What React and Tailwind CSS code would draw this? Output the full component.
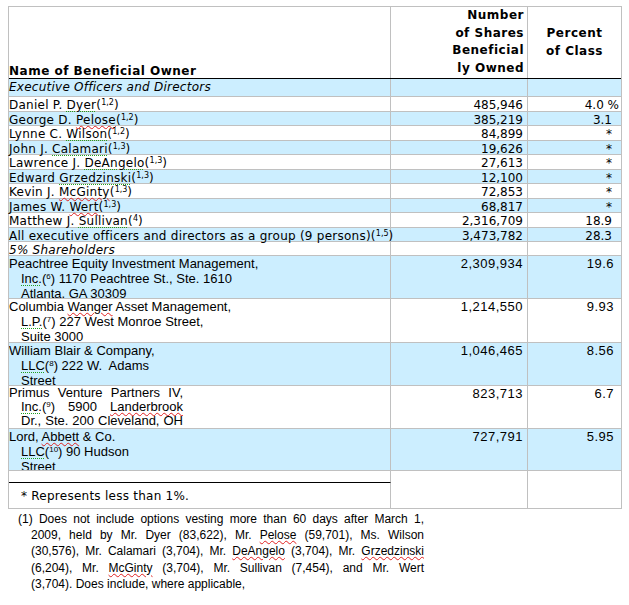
import React from 'react';

const Red = ({ children }) => (
  <span className="underline decoration-wavy decoration-[#e02020] decoration-1 underline-offset-[1px]">{children}</span>
);
const Green = ({ children }) => (
  <span className="underline decoration-dotted decoration-[#20a020] decoration-1 underline-offset-[2px]">{children}</span>
);
const Sup = ({ children }) => <sup className="text-[8px] top-[-4px] tracking-normal">{children}</sup>;

const Row = ({ blue, name, shares, pct, pctPad = 'pr-[9px]', h = 'h-[14.5px]', italic }) => (
  <div className={`grid grid-cols-[382px_137px_93px] ${h} border-b border-[#c0c0c0] ${blue ? 'bg-[#cceeff]' : 'bg-white'}`}>
    <div className={`border-r border-[#c0c0c0] pt-[2px] leading-[13px] whitespace-nowrap tracking-[0.25px] ${italic ? 'italic' : ''}`}>{name}</div>
    <div className="border-r border-[#c0c0c0] pt-[2px] leading-[13px] text-right pr-[4px]">{shares}</div>
    <div className={`pt-[2px] leading-[13px] text-right ${pctPad}`}>{pct}</div>
  </div>
);

const Holder = ({ blue, lines, shares, pct, h = 'h-[43.5px]', justify }) => (
  <div className={`grid grid-cols-[382px_137px_93px] ${h} border-b border-[#c0c0c0] ${blue ? 'bg-[#cceeff]' : 'bg-white'} font-['Liberation_Sans',Arial,sans-serif] text-[13px]`}>
    <div className={`border-r border-[#c0c0c0] overflow-hidden ${justify ? 'leading-[14px]' : 'leading-[15px]'}`}>
      {lines.map((l, i) => (
        <div
          key={i}
          className={`whitespace-nowrap ${i > 0 ? 'pl-[12px]' : ''} ${justify ? 'w-[174px] [text-align-last:justify]' : ''}`}
        >
          {l}
        </div>
      ))}
    </div>
    <div className="border-r border-[#c0c0c0] leading-[15px] text-right pr-[4px] tracking-[0.5px]">{shares}</div>
    <div className="leading-[15px] text-right pr-[7px] tracking-[0.5px]">{pct}</div>
  </div>
);

export default function App() {
  return (
    <div className="min-h-[605px] bg-white pt-[6px] pl-[8px] text-black font-['DejaVu_Sans',Verdana,sans-serif] text-[12px]">
      <div className="w-[614px] border border-[#c0c0c0]">
        {/* header */}
        <div className="grid grid-cols-[382px_137px_93px] h-[72px] border-b border-black font-bold tracking-[0.5px]">
          <div className="border-r border-[#c0c0c0] flex items-end leading-[14px]">Name of Beneficial Owner</div>
          <div className="border-r border-[#c0c0c0] text-right pr-[3px] leading-[17.5px]">
            Number<br />of Shares<br />Beneficial<br />ly Owned
          </div>
          <div className="flex items-center justify-center text-center leading-[17.5px]">
            Percent<br />of Class
          </div>
        </div>

        <Row blue italic h="h-[18px]" name="Executive Officers and Directors" />
        <Row name={<>Daniel P. <Green>Dyer</Green>(<Sup>1,2</Sup>)</>} shares="485,946" pct="4.0 %" pctPad="pr-[2px]" />
        <Row blue name={<>George D. <Red>Pelose</Red>(<Sup>1,2</Sup>)</>} shares="385,219" pct="3.1" />
        <Row name={<>Lynne C. <Green>Wilson</Green>(<Sup>1,2</Sup>)</>} shares="84,899" pct="*" />
        <Row blue name={<>John J. <Green>Calamari</Green>(<Sup>1,3</Sup>)</>} shares="19,626" pct="*" />
        <Row name={<>Lawrence J. <Green>DeAngelo</Green>(<Sup>1,3</Sup>)</>} shares="27,613" pct="*" />
        <Row blue name={<>Edward <Green>Grzedzinski</Green>(<Sup>1,3</Sup>)</>} shares="12,100" pct="*" />
        <Row name={<>Kevin J. <Red>McGinty</Red>(<Sup>1,3</Sup>)</>} shares="72,853" pct="*" />
        <Row blue name={<>James W. <Red>Wert</Red>(<Sup>1,3</Sup>)</>} shares="68,817" pct="*" />
        <Row name={<>Matthew J. <Green>Sullivan</Green>(<Sup>4</Sup>)</>} shares="2,316,709" pct="18.9" />
        <Row blue name={<>All executive officers and directors as a group (9 persons)(<Sup>1,5</Sup>)</>} shares="3,473,782" pct="28.3" />
        <Row italic h="h-[13.5px]" name="5% Shareholders" />

        <Holder
          blue
          lines={[
            'Peachtree Equity Investment Management,',
            <><Green>Inc.</Green>(<Sup>6</Sup>) 1170 Peachtree St., Ste. 1610</>,
            'Atlanta, GA 30309',
          ]}
          shares="2,309,934"
          pct="19.6"
        />
        <Holder
          lines={[
            <>Columbia <Red>Wanger</Red> Asset Management,</>,
            <><Green>L.P.</Green>(<Sup>7</Sup>) 227 West Monroe Street,</>,
            'Suite 3000',
          ]}
          shares="1,214,550"
          pct="9.93"
        />
        <Holder
          blue
          h="h-[43px]"
          lines={[
            'William Blair & Company,',
            <><Green>LLC</Green>(<Sup>8</Sup>) 222 W.&nbsp; Adams</>,
            'Street',
          ]}
          shares="1,046,465"
          pct="8.56"
        />
        <Holder
          justify
          lines={[
            'Primus Venture Partners IV,',
            <><Green>Inc.</Green>(<Sup>9</Sup>) 5900 <Red>Landerbrook</Red></>,
            'Dr., Ste. 200 Cleveland, OH',
          ]}
          shares="823,713"
          pct="6.7"
        />
        <Holder
          blue
          h="h-[42px]"
          lines={[
            <>Lord, <Red>Abbett</Red> &amp; Co.</>,
            <><Green>LLC</Green>(<Sup>10</Sup>) 90 Hudson</>,
            'Street',
          ]}
          shares="727,791"
          pct="5.95"
        />

        {/* empty row with black rule under first column */}
        <div className="grid grid-cols-[382px_137px_93px] h-[12px]">
          <div className="border-r border-b border-r-[#c0c0c0] border-b-black"></div>
          <div className="border-r border-[#c0c0c0]"></div>
          <div></div>
        </div>
        <div className="grid grid-cols-[382px_137px_93px] h-[25px]">
          <div className="border-r border-[#c0c0c0] pl-[12px] pt-[7px] leading-[13px] tracking-[0.25px]">* Represents less than 1%.</div>
          <div className="border-r border-[#c0c0c0]"></div>
          <div></div>
        </div>
      </div>

      {/* footnote */}
      <div className="ml-[10px] mt-[1.5px] w-[406px] font-['Liberation_Sans',Arial,sans-serif] text-[12px] leading-[16.4px]">
        <div className="[text-align-last:justify]">(1) Does not include options vesting more than 60 days after March 1,</div>
        <div className="pl-[13px] [text-align-last:justify]">2009, held by Mr. Dyer (83,622), Mr. <Red>Pelose</Red> (59,701), Ms. Wilson</div>
        <div className="pl-[13px] [text-align-last:justify]">(30,576), Mr. Calamari (3,704), Mr. <Red>DeAngelo</Red> (3,704), Mr. <Red>Grzedzinski</Red></div>
        <div className="pl-[13px] [text-align-last:justify]">(6,204), Mr. <Red>McGinty</Red> (3,704), Mr. Sullivan (7,454), and Mr. Wert</div>
        <div className="pl-[13px]">(3,704). Does include, where applicable,</div>
      </div>
    </div>
  );
}
